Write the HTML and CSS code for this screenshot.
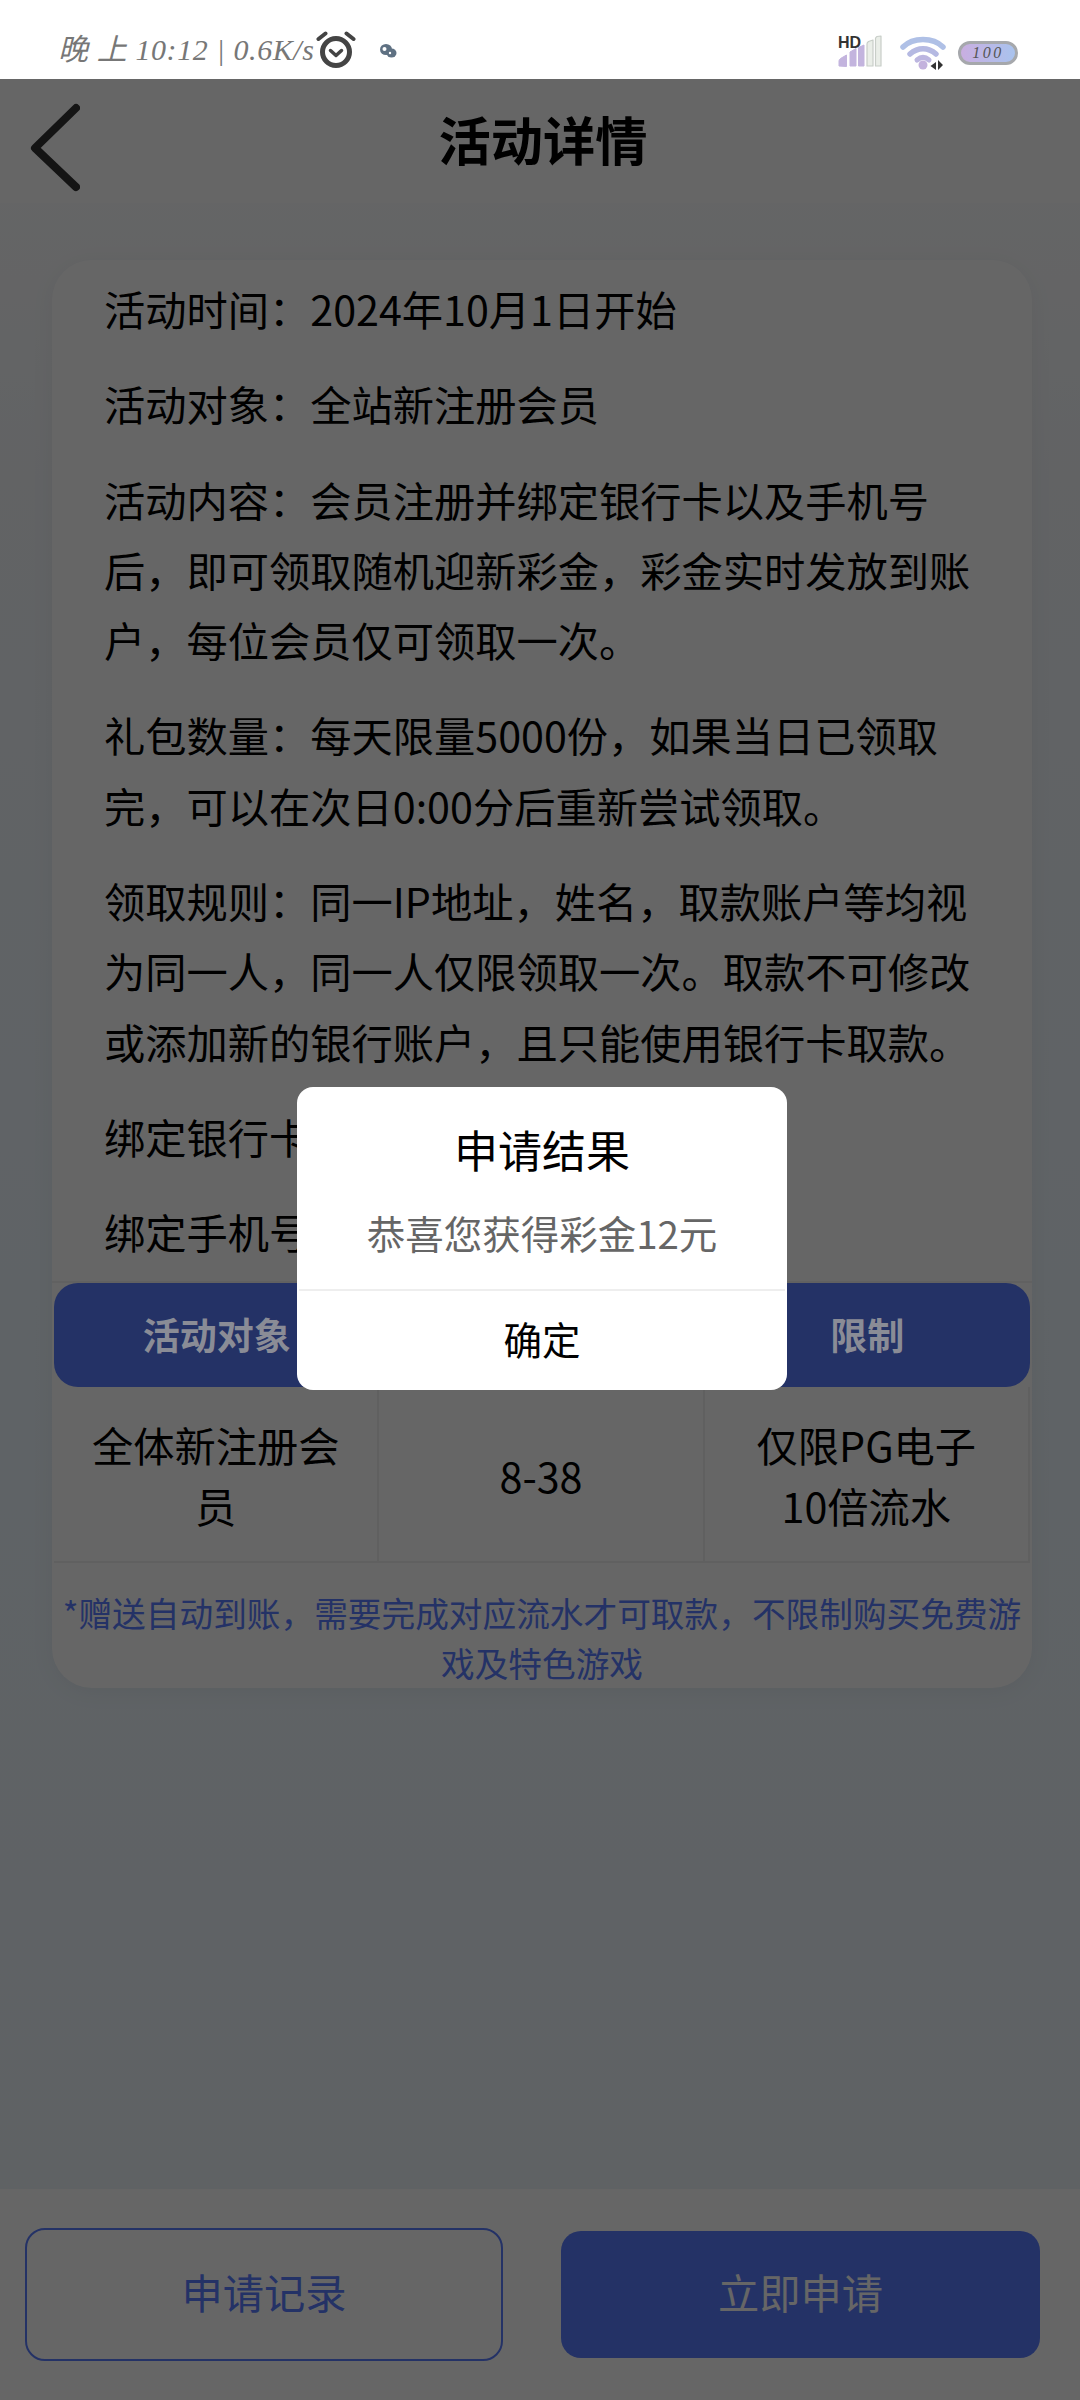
FILE: index.html
```html
<!DOCTYPE html>
<html lang="zh-CN">
<head>
<meta charset="utf-8">
<title>活动详情</title>
<link rel="stylesheet" href="styles.css">
</head>
<body>
<div class="phone">
  <div class="statusbar">
    <div class="status-left">
      <span class="status-text">晚 上 10:12 | 0.6K/s</span>
      <svg class="alarm" viewBox="0 0 40 40" width="40" height="40"><circle cx="20" cy="22" r="13.500" fill="none" stroke="#444" stroke-width="5"/><path d="M14.500 20.500l5.500 5 5.500-5" fill="none" stroke="#444" stroke-width="3.500" stroke-linecap="round" stroke-linejoin="round"/><path d="M2.500 9 9.500 3.500M37.500 9 30.500 3.500" stroke="#444" stroke-width="4" stroke-linecap="round"/></svg>
      <svg class="wechat" viewBox="0 0 18 16" width="18" height="16"><ellipse cx="7" cy="6.500" rx="6" ry="5.500" fill="#5f7183"/><ellipse cx="12.500" cy="10" rx="5" ry="4.500" fill="#5f7183"/><circle cx="5.500" cy="6" r="2" fill="#fff"/><circle cx="11" cy="10" r="1.200" fill="#fff"/></svg>
    </div>
    <div class="status-right">
      <svg class="signal" viewBox="0 0 44 32" width="44" height="32"><text x="0" y="12" class="hd">HD</text><path d="M1 30v-5q0-1.500 1.500-2.500l6-3.500v11.500zM12 30V16l6-3.500V30zM20.500 30V11.500L26 9v21z" fill="#c3b4de" stroke="#c3b4de" stroke-width="1" stroke-linejoin="round"/><path d="M29 30V8q0-1.500 1.500-2.500L35 4v26zM37.500 30V2.500q0-1 1.500-2L43 0v30z" fill="#eaeee8" stroke="#c8cec8" stroke-width="1.200" stroke-linejoin="round"/></svg>
      <svg class="wifi" viewBox="0 0 46 34" width="46" height="34"><path d="M3 11C13 1 33 1 43 11" fill="none" stroke="#afc0e6" stroke-width="5.500" stroke-linecap="round"/><path d="M10 18c8-7 18-7 26 0" fill="none" stroke="#b5b9e2" stroke-width="5.500" stroke-linecap="round"/><path d="M17 24c4-3.500 8-3.500 12 0" fill="none" stroke="#bcb6e0" stroke-width="5" stroke-linecap="round"/><circle cx="23" cy="29" r="4.500" fill="#c3b2dd"/><path d="M36 26v8l-5.500-4zM38 24v10l5-5z" fill="#333"/></svg>
      <div class="battery"><span class="battery-num">100</span></div>
    </div>
  </div>
  <div class="page">
    <header class="nav">
      <svg class="back" viewBox="0 0 50 100" width="50" height="100"><path d="M46 14 5 54 46 93" fill="none" stroke="#343434" stroke-width="8" stroke-linecap="round" stroke-linejoin="round"/></svg>
      <h1 class="nav-title">活动详情</h1>
    </header>
    <section class="card">
      <div class="rules">
        <p>活动时间：2024年10月1日开始</p>
        <p>活动对象：全站新注册会员</p>
        <p>活动内容：会员注册并绑定银行卡以及手机号后，即可领取随机迎新彩金，彩金实时发放到账户，每位会员仅可领取一次。</p>
        <p>礼包数量：每天限量5000份，如果当日已领取完，可以在次日0:00分后重新尝试领取。</p>
        <p>领取规则：同一IP地址，姓名，取款账户等均视为同一人，同一人仅限领取一次。取款不可修改或添加新的银行账户，且只能使用银行卡取款。</p>
        <p>绑定银行卡</p>
        <p>绑定手机号</p>
      </div>
      <div class="table">
        <div class="thead">
          <div class="th">活动对象</div><div class="th"></div><div class="th">限制</div>
        </div>
        <div class="tbody">
          <div class="cell">全体新注册会员</div><div class="cell">8-38</div><div class="cell">仅限PG电子<br>10倍流水</div>
        </div>
      </div>
      <p class="note">*赠送自动到账，需要完成对应流水才可取款，不限制购买免费游戏及特色游戏</p>
    </section>
    <footer class="actions">
      <button class="btn btn-outline">申请记录</button>
      <button class="btn btn-solid">立即申请</button>
    </footer>
  </div>
  <div class="mask"></div>
  <div class="dialog">
    <h2 class="dialog-title">申请结果</h2>
    <p class="dialog-msg">恭喜您获得彩金12元</p>
    <div class="dialog-ok">确定</div>
  </div>
</div>
</body>
</html>
```
FILE: styles.css
```css
* { box-sizing: border-box; margin: 0; padding: 0; }
html, body { width: 1080px; height: 2400px; overflow: hidden; }
body { font-family: "Noto Sans CJK SC", "Noto Sans", sans-serif; background: #fff; }
.phone { position: relative; width: 1080px; height: 2400px; overflow: hidden; display: flex; flex-direction: column; }

.statusbar { height: 79px; flex: none; background: #fff; display: flex; justify-content: space-between; align-items: flex-start; padding: 30px 0 0 58px; position: relative; z-index: 3; }
.status-left { display: flex; align-items: center; }
.status-text { font-family: "Liberation Serif", "Noto Sans CJK SC", serif; font-style: italic; font-size: 30px; color: #777; line-height: 40px; width: 258px; white-space: nowrap; letter-spacing: .6px; }
.wechat { margin-left: 23px; margin-top: 2px; }
.status-right { display: flex; align-items: flex-start; padding: 6px 62px 0 0; }
.signal { margin-right: 18px; overflow: visible; }
.hd { font-family: "Liberation Sans", sans-serif; font-weight: 700; font-size: 16px; fill: #333; }
.wifi { margin-right: 12px; overflow: visible; }
.battery { width: 60px; height: 24px; margin-top: 5px; border: 3px solid #a6a8ac; border-radius: 12px; background: linear-gradient(90deg, #c9aee0, #a9c3ee); display: flex; align-items: center; justify-content: center; }
.battery-num { font-family: "Liberation Serif", serif; font-style: italic; font-size: 16px; color: #555; letter-spacing: 2.500px; line-height: 18px; }

.page { flex: 1; min-height: 0; display: flex; flex-direction: column; background: linear-gradient(180deg, #fff 0, #f4f7fb 400px, #eef8ff 1200px, #edf5fb 2100px); }
.nav { height: 124px; flex: none; position: relative; display: flex; align-items: center; justify-content: center; background: #fff; padding: 0 0 6px 6px; }
.back { position: absolute; left: 30px; top: 15px; }
.nav-title { font-size: 52.250px; line-height: 70px; font-weight: 700; color: #000; }

.card { margin: 57px 48px 0 52px; background: #fff; border-radius: 40px; overflow: hidden; flex: none; box-shadow: 0 4px 24px rgba(0,0,0,.05); }
.rules { height: 1023px; overflow: hidden; padding: 0 52px; border-bottom: 2px solid #f2f2f2; }
.rules p { font-size: 41.250px; line-height: 70.300px; color: #000; margin-top: 25px; }
.rules p:first-child { margin-top: 13px; }

.table { padding: 0 2px; }
.thead { height: 104px; display: grid; grid-template-columns: repeat(3, 1fr); align-items: center; text-align: center; background: #5a7dff; border-radius: 24px; }
.th { position: relative; z-index: 3; color: #8a8c96; font-size: 37px; font-weight: 700; line-height: 50px; margin-top: -3px; }
.tbody { height: 176px; display: grid; grid-template-columns: repeat(3, 1fr); border-bottom: 2px solid #f0f0f0; }
.cell { display: flex; align-items: center; justify-content: center; text-align: center; font-size: 41.250px; line-height: 61px; color: #000; padding: 2px 30px 0; border-right: 2px solid #f0f0f0; }
.note { padding: 25px 4px 0; height: 125px; text-align: center; font-size: 33.690px; line-height: 50px; color: #5a7dff; }

.actions { margin-top: auto; height: 211px; flex: none; background: #fff; display: flex; justify-content: space-between; padding: 0 40px 0 25px; align-items: flex-start; }
.btn { font-family: inherit; font-size: 41.250px; border-radius: 20px; padding-bottom: 8px; }
.btn-outline { width: 478px; height: 133px; margin-top: 39px; background: #fff; border: 2.500px solid #5a7dff; color: #5a7dff; }
.btn-solid { width: 479px; height: 127px; margin-top: 42px; background: #5a7dff; border: 0; color: #fff; }

.mask { position: absolute; left: 0; right: 0; top: 79px; bottom: 0; background: rgba(0,0,0,.6); z-index: 2; }
.dialog { position: absolute; left: 297px; top: 1087px; width: 490px; height: 303px; background: #fff; border-radius: 16px; z-index: 4; text-align: center; display: flex; flex-direction: column; overflow: hidden; }
.dialog-title { font-size: 44px; font-weight: 400; line-height: 60px; color: #000; margin-top: 32px; }
.dialog-msg { font-size: 38.500px; line-height: 56px; color: #666; margin-top: 25px; }
.dialog-ok { margin: 29px 2px 0; border-top: 2px solid #eee; flex: 1; font-size: 38.500px; line-height: 95px; color: #000; }
```
